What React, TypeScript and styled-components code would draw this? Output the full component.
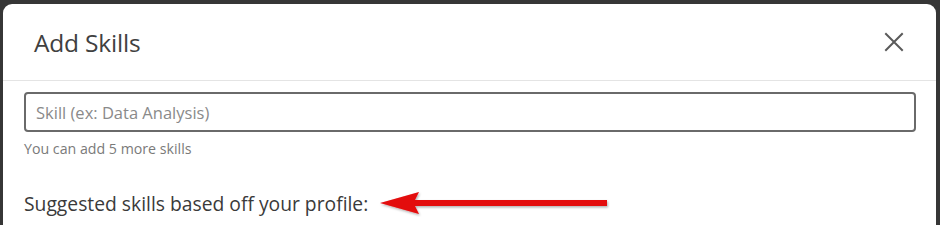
import React from "react";
import styled, { createGlobalStyle } from "styled-components";

const GlobalStyle = createGlobalStyle`
  html, body {
    margin: 0;
    padding: 0;
    background: #363636;
    font-family: "Open Sans", "Noto Sans", Arial, sans-serif;
  }
`;

const Page = styled.div`
  width: 940px;
  height: 225px;
  overflow: hidden;
  padding: 4px 4px 0 3px;
  box-sizing: border-box;
`;

const Modal = styled.div`
  background: #ffffff;
  border-radius: 9px 9px 0 0;
  height: 221px;
  overflow: hidden;
`;

const Header = styled.div`
  display: flex;
  align-items: center;
  justify-content: space-between;
  height: 76px;
  padding: 0 30px 0 31px;
  border-bottom: 1px solid #e4e4e4;
`;

const Title = styled.h2`
  margin: 0;
  font-size: 24.5px;
  font-weight: 400;
  color: #404040;
  letter-spacing: -0.2px;
`;

const CloseButton = styled.button`
  display: flex;
  align-items: center;
  justify-content: center;
  width: 24px;
  height: 24px;
  padding: 0;
  border: none;
  background: transparent;
  cursor: pointer;
`;

const Body = styled.div`
  padding: 11px 20px 0 21px;
`;

const SkillInput = styled.input`
  display: block;
  width: 100%;
  height: 40px;
  box-sizing: border-box;
  border: 2px solid #6a6a6a;
  border-radius: 4px;
  padding: 0 10px;
  font-family: inherit;
  font-size: 16.5px;
  color: #333;
  outline: none;

  &::placeholder {
    color: #8a8a8a;
  }
`;

const Helper = styled.div`
  margin-top: 7px;
  font-size: 14.2px;
  color: #7a7a7a;
`;

const SuggestRow = styled.div`
  display: flex;
  align-items: center;
  margin-top: 32px;
`;

const SuggestLabel = styled.span`
  font-size: 19.3px;
  color: #3a3a3a;
`;

const Arrow = styled.svg`
  margin-left: 11px;
  flex-shrink: 0;
`;

export default function App() {
  return (
    <>
      <GlobalStyle />
      <Page>
        <Modal>
          <Header>
            <Title>Add Skills</Title>
            <CloseButton aria-label="Close">
              <svg width="20" height="20" viewBox="0 0 20 20">
                <path
                  d="M2 2 L18 18 M18 2 L2 18"
                  stroke="#5a5a5a"
                  strokeWidth="2"
                  strokeLinecap="square"
                />
              </svg>
            </CloseButton>
          </Header>
          <Body>
            <SkillInput placeholder="Skill (ex: Data Analysis)" />
            <Helper>You can add 5 more skills</Helper>
            <SuggestRow>
              <SuggestLabel>Suggested skills based off your profile:</SuggestLabel>
              <Arrow width="232" height="26" viewBox="0 0 232 26">
                <defs>
                  <filter id="sh" x="-10%" y="-40%" width="120%" height="180%">
                    <feDropShadow dx="1" dy="1.5" stdDeviation="1" floodColor="#000" floodOpacity="0.3" />
                  </filter>
                </defs>
                <g filter="url(#sh)">
                  <path d="M1 12 L40 1 L36 9 L228 9 L228 15 L36 15 L40 23 Z" fill="#e3090a" />
                </g>
              </Arrow>
            </SuggestRow>
          </Body>
        </Modal>
      </Page>
    </>
  );
}
